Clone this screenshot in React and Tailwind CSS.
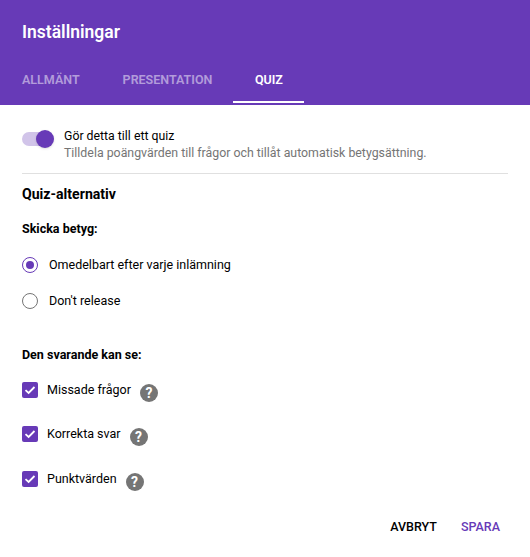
import React from "react";

const font = { fontFamily: "Roboto, sans-serif" };

function Help() {
  return (
    <span className="ml-[9px] mt-[6px] flex h-[18px] w-[18px] items-center justify-center rounded-full bg-[#757575] text-[14px] font-bold leading-none text-white">
      ?
    </span>
  );
}

function CheckRow({ label, className }) {
  return (
    <div className={`flex items-center ${className}`}>
      <span className="flex h-4 w-4 items-center justify-center rounded-[2px] bg-[#673ab7]">
        <svg width="12" height="12" viewBox="0 0 12 12" fill="none">
          <path d="M1.5 6.2 L4.6 9 L10.5 3" stroke="white" strokeWidth="1.8" />
        </svg>
      </span>
      <span className="ml-[9px] text-[12.5px] leading-[16px] text-black">{label}</span>
      <Help />
    </div>
  );
}

export default function App() {
  return (
    <div className="h-[557px] w-[530px] bg-white" style={font}>
      <div className="h-[105px] bg-[#673ab7] pl-[22px]">
        <h1 className="pt-[20px] text-[17.5px] font-semibold leading-[24px] text-white">Inställningar</h1>
        <div className="mt-[26px] flex text-[12.5px] font-semibold leading-[20px]">
          <span className="text-white/50">ALLMÄNT</span>
          <span className="ml-[43px] text-white/50">PRESENTATION</span>
          <span className="ml-[21px] h-[33px] w-[71px] border-b-2 border-white text-center text-white">QUIZ</span>
        </div>
      </div>

      <div className="px-[22px]">
        <div className="flex h-[69px] items-start border-b border-[#e0e0e0] pt-[23px]">
          <div className="relative mt-[4px] h-[14px] w-[30px] rounded-full bg-[#d1c4e9]">
            <span className="absolute -top-[2px] left-[14px] h-[18px] w-[18px] rounded-full bg-[#673ab7] shadow" />
          </div>
          <div className="ml-[12px]">
            <div className="text-[12.3px] leading-[16px] text-black">Gör detta till ett quiz</div>
            <div className="mt-[1px] text-[12.35px] leading-[16px] text-[#757575]">
              Tilldela poängvärden till frågor och tillåt automatisk betygsättning.
            </div>
          </div>
        </div>

        <h2 className="mt-[10px] text-[14.1px] font-bold leading-[20px] text-black">Quiz-alternativ</h2>
        <h3 className="mt-[17px] text-[12.5px] font-bold leading-[16px] text-black">Skicka betyg:</h3>

        <div className="mt-[20px] flex items-center">
          <span className="flex h-4 w-4 items-center justify-center rounded-full border border-[#673ab7]">
            <span className="h-2 w-2 rounded-full bg-[#673ab7]" />
          </span>
          <span className="ml-[11px] text-[12.5px] leading-[16px] text-black">Omedelbart efter varje inlämning</span>
        </div>
        <div className="mt-[20px] flex items-center">
          <span className="h-4 w-4 rounded-full border border-[#757575]" />
          <span className="ml-[11px] text-[12.5px] leading-[16px] text-black">Don't release</span>
        </div>

        <h3 className="mt-[38px] text-[12.5px] font-bold leading-[16px] text-black">Den svarande kan se:</h3>

        <CheckRow label="Missade frågor" className="mt-[15px]" />
        <CheckRow label="Korrekta svar" className="mt-[20px]" />
        <CheckRow label="Punktvärden" className="mt-[21px]" />

        <div className="mt-[28px] flex justify-end pr-[8px] text-[12.5px] font-medium leading-[16px]">
          <span className="text-black">AVBRYT</span>
          <span className="ml-[24px] text-[#673ab7]">SPARA</span>
        </div>
      </div>
    </div>
  );
}
